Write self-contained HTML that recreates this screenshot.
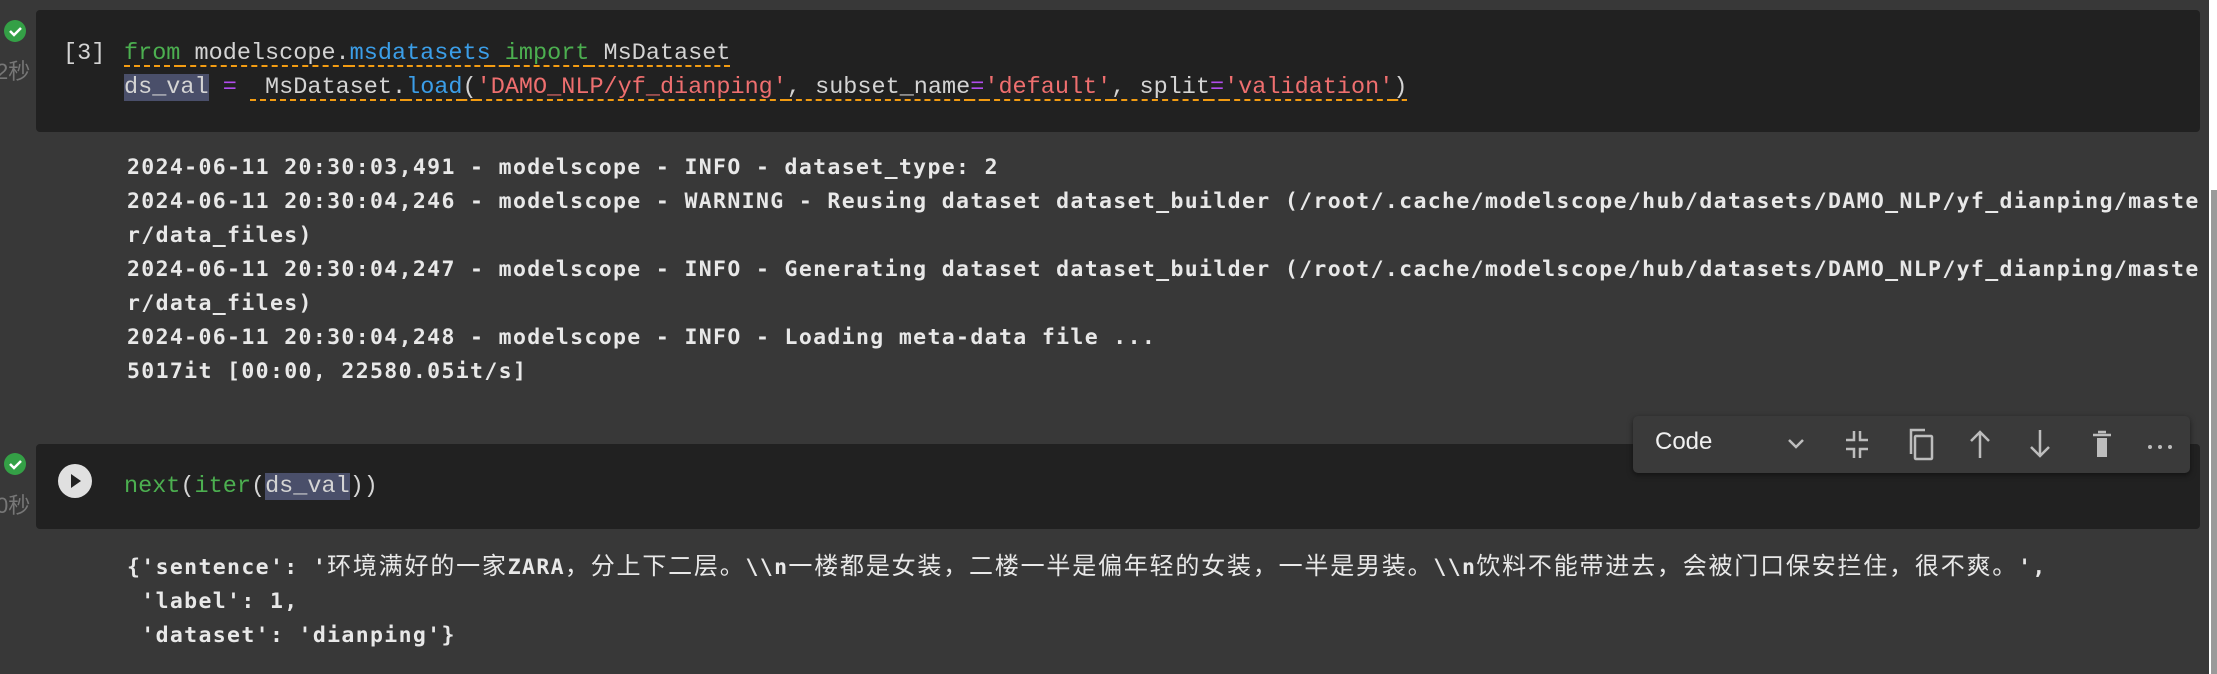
<!DOCTYPE html>
<html><head><meta charset="utf-8"><style>
html,body{margin:0;padding:0;width:2217px;height:674px;overflow:hidden;background:#383838;position:relative}
.abs{position:absolute}
.box{background:#212121;border-radius:4px}
.code{font-family:"Liberation Mono","Noto Sans CJK SC",monospace;font-size:23.5px;color:#d4d4d4;white-space:pre;line-height:34px}
.out{font-family:"DejaVu Sans Mono","Liberation Mono","Noto Sans CJK SC",monospace;font-size:21.5px;font-weight:bold;color:#e8e8e8;white-space:pre;line-height:34px;letter-spacing:1.35px}
.cj{letter-spacing:1.8px;font-size:24px;font-weight:normal}
.g{color:#4caf50}.b{color:#3b9ee8}.r{color:#ef6f6f}.p{color:#b24cf0}
.u{text-decoration:underline dashed #f39c12;text-underline-offset:6px;text-decoration-thickness:2px}
.hl{background:#4a4f6a}
.chk{width:22px;height:22px;border-radius:50%;background:#34a046}
.sec{font-family:"Liberation Sans","Noto Sans CJK SC",sans-serif;font-size:22px;color:#777}
</style></head><body>
<div class="abs" style="left:2209px;top:0;width:8px;height:674px;background:#fff"></div>
<div class="abs" style="left:2211px;top:190px;width:6px;height:484px;background:#9a9a9a"></div>

<div class="abs chk" style="left:4px;top:20px"><svg width="22" height="22"><path d="M6 11l4 4 7-7" stroke="#fff" stroke-width="2.5" fill="none"/></svg></div>
<div class="abs sec" style="left:-4px;top:54px">2秒</div>
<div class="abs box" style="left:36px;top:10px;width:2164px;height:122px"></div>
<div class="abs code" style="left:63px;top:37px">[3]</div>
<div class="abs code" style="left:124px;top:37px"><span class="u"><span class="g">from</span> modelscope.<span class="b">msdatasets</span> <span class="g">import</span> MsDataset</span></div>
<div class="abs code" style="left:124px;top:71px"><span class="hl">ds_val</span> <span class="p">=</span> <span class="u"> MsDataset.<span class="b">load</span>(<span class="r">'DAMO_NLP/yf_dianping'</span>, subset_name<span class="p">=</span><span class="r">'default'</span>, split<span class="p">=</span><span class="r">'validation'</span>)</span></div>

<div class="abs out" style="left:127px;top:151px">2024-06-11 20:30:03,491 - modelscope - INFO - dataset_type: 2
2024-06-11 20:30:04,246 - modelscope - WARNING - Reusing dataset dataset_builder (/root/.cache/modelscope/hub/datasets/DAMO_NLP/yf_dianping/maste
r/data_files)
2024-06-11 20:30:04,247 - modelscope - INFO - Generating dataset dataset_builder (/root/.cache/modelscope/hub/datasets/DAMO_NLP/yf_dianping/maste
r/data_files)
2024-06-11 20:30:04,248 - modelscope - INFO - Loading meta-data file ...
5017it [00:00, 22580.05it/s]</div>

<div class="abs chk" style="left:4px;top:453px"><svg width="22" height="22"><path d="M6 11l4 4 7-7" stroke="#fff" stroke-width="2.5" fill="none"/></svg></div>
<div class="abs sec" style="left:-4px;top:488px">0秒</div>
<div class="abs box" style="left:36px;top:444px;width:2164px;height:85px"></div>
<div class="abs" style="left:58px;top:464px;width:34px;height:34px;border-radius:50%;background:#e0e0e0"><svg width="34" height="34"><path d="M13 10l10 7-10 7z" fill="#212121"/></svg></div>
<div class="abs code" style="left:124px;top:470px"><span class="g">next</span>(<span class="g">iter</span>(<span class="hl">ds_val</span>))</div>

<div class="abs" style="left:1633px;top:416px;width:557px;height:57px;background:#3a3a3a;border-radius:5px;box-shadow:0 2px 6px rgba(0,0,0,.5)">
<div class="abs" style="left:22px;top:12px;font-family:'Liberation Sans',sans-serif;font-size:24px;color:#f0f0f0">Code</div>
<svg class="abs" style="left:0;top:0" width="557" height="57" fill="none" stroke="#bdbdbd" stroke-width="2.5">
<path d="M156 24l7 7 7-7"/>
<path d="M221 15v9h-8M227 15v9h8M221 42v-9h-8M227 42v-9h8"/>
<rect x="282" y="20" width="17" height="23" rx="1"/><path d="M278 38V14h14"/>
<path d="M347 16v26M338 25l9-9 9 9"/>
<path d="M407 14v26M398 31l9 9 9-9"/>
<path d="M460 19h18M465 16h8" /><rect x="464" y="22" width="10" height="19" fill="#bdbdbd" stroke="none"/>
<circle cx="517" cy="31" r="2" fill="#bdbdbd" stroke="none"/><circle cx="527" cy="31" r="2" fill="#bdbdbd" stroke="none"/><circle cx="537" cy="31" r="2" fill="#bdbdbd" stroke="none"/>
</svg></div>

<div class="abs out" style="left:127px;top:549px">{'sentence': '<span class="cj">环境满好的一家</span>ZARA<span class="cj">，分上下二层。</span>\\n<span class="cj">一楼都是女装，二楼一半是偏年轻的女装，一半是男装。</span>\\n<span class="cj">饮料不能带进去，会被门口保安拦住，很不爽。</span>',
 'label': 1,
 'dataset': 'dianping'}</div>
</body></html>
